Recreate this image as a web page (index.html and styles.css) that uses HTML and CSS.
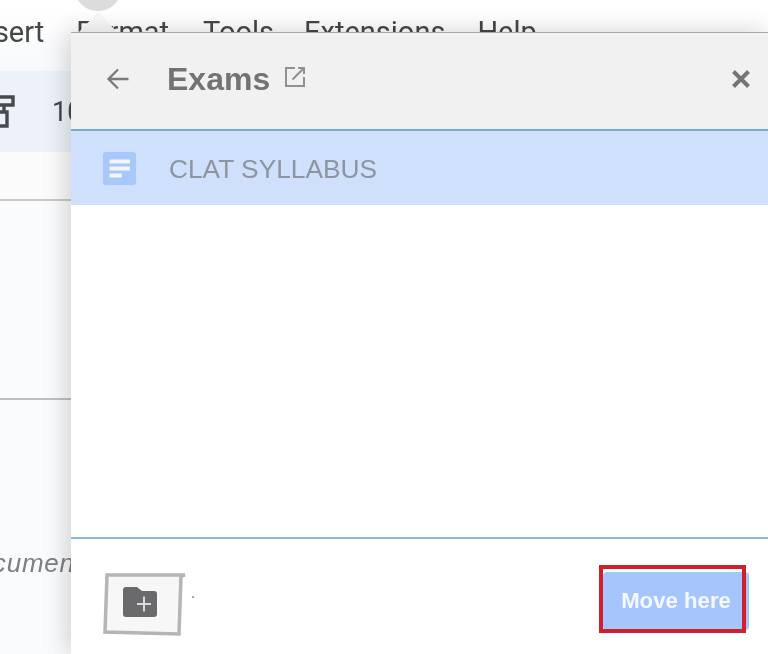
FILE: index.html
```html
<!DOCTYPE html>
<html lang="en">
<head>
<meta charset="utf-8">
<title>Move to folder</title>
<link rel="stylesheet" href="styles.css">
</head>
<body>
<div class="page">
  <div class="menu">
    <span class="m-insert">Insert</span>
    <span class="m-format">Format</span>
    <span class="m-tools">Tools</span>
    <span class="m-ext">Extensions</span>
    <span>Help</span>
  </div>
  <div class="toolbar">
    <svg class="tool-icon" viewBox="0 0 16 34" width="16" height="34"><path d="M-6 2H13V10H-6M4 10V17M-6 17H7V31H-6" fill="none" stroke="#47494d" stroke-width="3.4"/></svg>
    <span class="zoom">10</span>
  </div>
  <div class="ruler"></div>
  <div class="doc">
    <div class="doc-area"></div>
    <div class="outline">
      <span class="hint">Document</span>
    </div>
  </div>
</div>

<div class="avatar"></div>
<div class="pointer"></div>

<section class="dialog">
  <header class="head">
    <svg class="back" viewBox="0 0 24 24" width="24" height="24"><path d="M22.500 12H3M12 2.500 2.500 12l9.500 9.500" fill="none" stroke="#7a7a7a" stroke-width="2.300"/></svg>
    <h1 class="title">Exams</h1>
    <svg class="open" viewBox="0 0 22 22" width="22" height="22"><path d="M11 2H2V20H20V11M14 2H20V8M20 2 8.500 13.500" fill="none" stroke="#919191" stroke-width="2"/></svg>
    <svg class="close" viewBox="0 0 20 20" width="20" height="20"><path d="M2.500 2.500 17.500 17.500M17.500 2.500 2.500 17.500" fill="none" stroke="#757575" stroke-width="4"/></svg>
  </header>
  <div class="item">
    <svg class="doc-icon" viewBox="0 0 33 33" width="33" height="33"><rect width="33" height="33" rx="3" fill="#a8c7fa"/><path d="M6.500 9.500H27M6.500 16.500H27M6.500 23.500H19" stroke="#f2f6ff" stroke-width="3.800"/></svg>
    <span class="name">CLAT SYLLABUS</span>
  </div>
  <div class="list"></div>
  <footer class="foot">
    <div class="new-folder">
      <svg class="sketch" viewBox="0 0 86 66" width="86" height="66"><path d="M5 3 83 3 79 4 77 62 3 60 5 3Z" fill="#f7f7f7" stroke="#b5b5b5" stroke-width="3.500"/><circle cx="91" cy="25" r="1" fill="#888"/></svg>
      <svg class="folder" viewBox="0 0 34 30" width="34" height="30"><path d="M3 0H14L19 4H31Q34 4 34 7V27Q34 30 31 30H3Q0 30 0 27V3Q0 0 3 0Z" fill="#6a6a6c"/><path d="M21 9.500V24.500M14 17H28" stroke="#d9d9d9" stroke-width="2"/></svg>
    </div>
    <div class="move-wrap">
      <button class="move" type="button">Move here</button>
      <div class="highlight"></div>
    </div>
  </footer>
</section>
</body>
</html>
```

FILE: styles.css
```css
html, body {
  margin: 0;
  height: 654px;
  overflow: hidden;
  background: #fff;
}
body {
  font-family: "Liberation Sans", Arial, sans-serif;
  position: relative;
  width: 768px;
  filter: blur(0.5px);
}
.page {
  display: flex;
  flex-direction: column;
  height: 654px;
  background: #fafbfd;
}
.menu {
  display: flex;
  height: 71px;
  box-sizing: border-box;
  padding-top: 13px;
  margin-left: -30px;
  font-family: Roboto, sans-serif;
  font-size: 29px;
  line-height: 38px;
  color: #444746;
  white-space: nowrap;
  background: linear-gradient(#fff, #f8f9fb);
}
.m-insert { margin-right: 32px; }
.m-format { margin-right: 34px; }
.m-tools { margin-right: 30px; }
.m-ext { margin-right: 32px; }
.toolbar {
  height: 81px;
  display: flex;
  align-items: center;
  background: #edf2fa;
}
.tool-icon { margin-left: 0; margin-right: 36px; flex: none; }
.zoom {
  font-family: Roboto, sans-serif;
  font-size: 27px;
  color: #444746;
}
.ruler {
  height: 47px;
  background: #fbfbfc;
  border-bottom: 2px solid #c9cacc;
}
.doc { flex: 1; display: flex; flex-direction: column; }
.doc-area {
  height: 197px;
  background: #f9fbfd;
  border-bottom: 2px solid #bfc0c2;
}
.outline {
  height: 160px;
}
.hint {
  display: block;
  margin-top: 148px;
  margin-left: -42px;
  font-size: 26px;
  line-height: 30px;
  font-style: italic;
  color: #7c7f85;
  white-space: nowrap;
  letter-spacing: 0.800px;
}
.avatar {
  position: absolute;
  left: 74px;
  top: -37px;
  width: 48px;
  height: 48px;
  border-radius: 50%;
  background: #dcdcde;
}
.pointer {
  position: absolute;
  left: 78px;
  top: 12px;
  width: 40px;
  height: 21px;
  background: #f7f7f7;
  clip-path: polygon(50% 0, 100% 100%, 0 100%);
}
.dialog {
  position: absolute;
  left: 71px;
  top: 32px;
  right: 0;
  bottom: 0;
  display: flex;
  flex-direction: column;
  background: #fff;
  border-top: 1px solid #a9a9a9;
  box-shadow: -5px 0 22px rgba(0, 0, 0, 0.16);
}
.head {
  height: 96px;
  display: flex;
  align-items: flex-start;
  background: #f1f1f1;
  border-bottom: 2px solid #78a7d8;
}
.back { margin: 34px 0 0 35px; flex: none; }
.title {
  margin: 28px 0 0 37px;
  font-size: 32px;
  line-height: 37px;
  font-weight: 700;
  color: #737373;
}
.open { margin: 33px 0 0 14px; flex: none; }
.close { margin: 36px 17px 0 auto; flex: none; }
.item {
  height: 74px;
  display: flex;
  align-items: center;
  background: #cfe0fc;
}
.doc-icon { margin: 1px 0 0 32px; flex: none; }
.name {
  margin: 2px 0 0 33px;
  font-size: 26.300px;
  color: #8e95a2;
}
.list { flex: 1; background: #fff; }
.foot {
  height: 117px;
  box-sizing: border-box;
  border-top: 2px solid #8ab4e4;
  display: flex;
  justify-content: space-between;
  align-items: flex-start;
  background: #fff;
}
.new-folder {
  position: relative;
  width: 86px;
  height: 66px;
  margin: 33px 0 0 31px;
}
.sketch { display: block; overflow: visible; }
.folder { position: absolute; left: 21px; top: 15px; }
.move-wrap {
  position: relative;
  margin: 33px 19px 0 0;
}
.move {
  display: block;
  width: 146px;
  height: 58px;
  padding: 0;
  border: 0;
  border-radius: 4px;
  background: #a6c5fb;
  color: #f4f8ff;
  font: 700 22.200px "Liberation Sans", Arial, sans-serif;
}
.highlight {
  position: absolute;
  left: -4px;
  top: -7px;
  width: 139px;
  height: 60px;
  border: 4px solid #d0202e;
}
```
